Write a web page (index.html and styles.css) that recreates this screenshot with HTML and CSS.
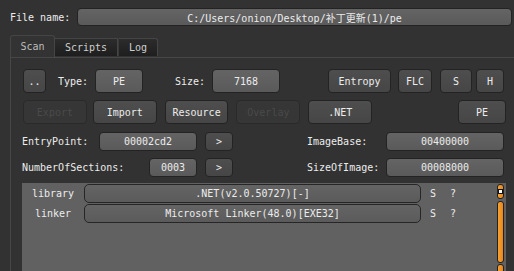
FILE: index.html
```html
<!DOCTYPE html>
<html lang="en">
<head>
  <meta charset="UTF-8" />
  <title>PE Scan</title>
  <link rel="stylesheet" href="styles.css">
</head>
<body>

  <div class="file-row">
    <span class="file-label">File name:</span>
    <div class="field file-field">C:/Users/onion/Desktop/补丁更新(1)/pe</div>
  </div>

  <div class="tabs">
    <div class="tab active">Scan</div>
    <div class="tab scripts">Scripts</div>
    <div class="tab log">Log</div>
  </div>

  <div class="panel">
    <div class="row row-top">
      <div class="btn w-dots">..</div>
      <span class="lbl lbl-type">Type:</span>
      <div class="field w-type">PE</div>
      <span class="lbl lbl-size">Size:</span>
      <div class="field w-size">7168</div>
      <div class="btn w-entropy">Entropy</div>
      <div class="btn w-flc">FLC</div>
      <div class="btn w-s">S</div>
      <div class="btn w-h">H</div>
    </div>

    <div class="row row-top row-second">
      <div class="btn off w-wide">Export</div>
      <div class="btn w-wide ml6">Import</div>
      <div class="btn w-wide ml8">Resource</div>
      <div class="btn off w-wide ml8">Overlay</div>
      <div class="btn w-wide ml8">.NET</div>
      <div class="btn w-pe">PE</div>
    </div>

    <div class="row row-info">
      <span class="lbl lbl-ep">EntryPoint:</span>
      <div class="field w-ep">00002cd2</div>
      <div class="btn w-go">&gt;</div>
      <span class="lbl lbl-right">ImageBase:</span>
      <div class="field w-right">00400000</div>
    </div>

    <div class="row row-info row-fourth">
      <span class="lbl lbl-nos">NumberOfSections:</span>
      <div class="field w-nos">0003</div>
      <div class="btn w-go">&gt;</div>
      <span class="lbl lbl-right">SizeOfImage:</span>
      <div class="field w-right">00008000</div>
    </div>

    <div class="list">
      <div class="list-rows">
        <div class="list-row">
          <span class="list-name">library</span>
          <div class="list-field">.NET(v2.0.50727)[-]</div>
          <span class="list-s">S</span>
          <span class="list-q">?</span>
        </div>
        <div class="list-row">
          <span class="list-name">linker</span>
          <div class="list-field">Microsoft Linker(48.0)[EXE32]</div>
          <span class="list-s">S</span>
          <span class="list-q">?</span>
        </div>
      </div>
      <div class="scrollbar">
        <div class="sb-up"><span class="sb-dot"></span></div>
        <div class="sb-thumb"></div>
        <div class="sb-down"></div>
      </div>
    </div>
  </div>

</body>
</html>
```

FILE: styles.css
```css
body {
  margin: 0;
  height: 271px;
  overflow: hidden;
  background: #323232;
  color: #ececec;
  font-family: "DejaVu Sans Mono", "Noto Sans CJK SC", monospace;
  font-size: 10px;
}

.field,
.btn {
  box-sizing: border-box;
  display: flex;
  align-items: center;
  justify-content: center;
  border: 1px solid #232323;
  border-radius: 4px;
  white-space: nowrap;
}

.field {
  background: linear-gradient(#646464, #5a5a5a);
}

.btn {
  background: linear-gradient(#4e4e4e, #464646);
}

.btn.off {
  background: #363636;
  border-color: #2a2a2a;
  color: #4a4a4a;
}

/* file name */
.file-row {
  display: flex;
  align-items: center;
  padding: 8px 2px 0 10px;
  height: 18px;
}

.file-label {
  width: 67px;
}

.file-field {
  flex: 1;
  height: 18px;
  border-radius: 4px;
}

/* tabs */
.tabs {
  display: flex;
  align-items: flex-end;
  margin: 9px 0 0 10px;
  height: 22px;
}

.tab {
  box-sizing: border-box;
  display: flex;
  align-items: center;
  justify-content: center;
  height: 18px;
  border: 1px solid #454545;
  border-bottom: none;
  background: linear-gradient(#2c2c2c, #1e1e1e);
  color: #cfcfcf;
  margin-bottom: 1px;
}

.tab.active {
  width: 45px;
  height: 22px;
  margin-bottom: 0;
  background: #333;
  border-radius: 3px 3px 0 0;
  color: #bdbdbd;
}

.tab.scripts {
  width: 63px;
  border-left: none;
}

.tab.log {
  width: 40px;
  border-left: 1px solid #3a3a3a;
  border-radius: 0 3px 0 0;
}

/* scan panel */
.panel {
  margin-left: 10px;
  border-top: 1px solid #474747;
  border-left: 1px solid #474747;
  padding: 11px 8px 0 12px;
}

.row {
  display: flex;
  align-items: center;
}

.row-top .btn,
.row-top .field {
  height: 24px;
}

.row-second {
  margin-top: 7px;
}

.row-info {
  margin-top: 8px;
}

.row-info .btn,
.row-info .field {
  height: 19px;
}

.row-fourth {
  margin-top: 7px;
}

.w-dots { width: 23px; }
.lbl-type { margin-left: 12px; width: 37px; }
.w-type { width: 48px; }
.lbl-size { margin-left: 32px; width: 37px; }
.w-size { width: 68px; }
.w-entropy { margin-left: 48px; width: 63px; }
.w-flc { margin-left: 7px; width: 34px; }
.w-s { margin-left: 8px; width: 32px; }
.w-h { margin-left: 4px; width: 28px; }

.w-wide { width: 64px; }
.ml6 { margin-left: 6px; }
.ml8 { margin-left: 8px; }
.w-pe { margin-left: 86px; width: 48px; }

.lbl-ep { width: 76px; margin-left: -1px; padding-left: 0; }
.w-ep { width: 98px; margin-left: 1px; }
.lbl-nos { width: 126px; margin-left: -1px; }
.w-nos { width: 48px; margin-left: 1px; }
.w-go { margin-left: 8px; width: 28px; }
.lbl-right { margin-left: 74px; width: 79px; }
.w-right { width: 118px; }

/* detection list */
.list {
  display: flex;
  margin: 6px 0 0 -1px;
  height: 100px;
  background: #616161;
}

.list-rows {
  flex: 1;
  padding-top: 1px;
}

.list-row {
  display: flex;
  align-items: center;
  height: 19px;
  margin-bottom: 1px;
}

.list-name {
  width: 62px;
  text-align: center;
}

.list-field {
  box-sizing: border-box;
  width: 337px;
  height: 19px;
  display: flex;
  align-items: center;
  justify-content: center;
  border: 1px solid #262626;
  border-radius: 5px;
  background: linear-gradient(#646464, #5b5b5b);
}

.list-s { margin-left: 9px; }
.list-q { margin-left: 14px; }

.scrollbar {
  display: flex;
  flex-direction: column;
  width: 7px;
  margin: 1px 2px 0 0;
}

.sb-up,
.sb-thumb,
.sb-down {
  box-sizing: border-box;
  background: linear-gradient(90deg, #f7a234, #e8861a);
  border: 1px solid #222;
  border-radius: 3px;
}

.sb-up {
  height: 15px;
  display: flex;
  align-items: center;
  justify-content: center;
}

.sb-dot {
  width: 3px;
  height: 3px;
  background: #fff;
  outline: 1px solid #111;
}

.sb-thumb {
  height: 62px;
  margin-top: 2px;
}

.sb-down {
  height: 15px;
  margin-top: 1px;
}
```
